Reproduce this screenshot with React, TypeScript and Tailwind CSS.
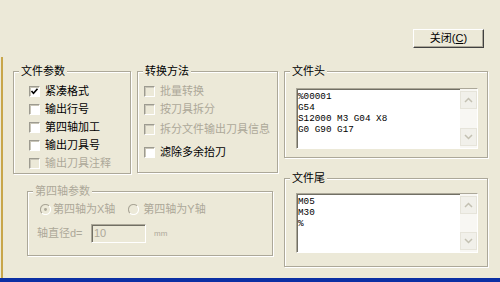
import clsx from "clsx";

function Check({ checked, disabled }: { checked?: boolean; disabled?: boolean }) {
  return (
    <span
      className={clsx(
        "relative box-border block size-[11px] shrink-0 border border-t-[#9d9b90] border-l-[#9d9b90] border-r-white border-b-white shadow-[inset_1px_1px_0_#c9c6b8]",
        disabled ? "bg-[#ECE9D8]" : "bg-white"
      )}
    >
      {checked && (
        <svg className="absolute left-0 top-0" width="9" height="9" viewBox="0 0 9 9">
          <path d="M1.5 4 L3.5 6.3 L7.5 1.8" stroke="#000" strokeWidth="1.6" fill="none" />
        </svg>
      )}
    </span>
  );
}

function Radio({ on }: { on?: boolean }) {
  return (
    <svg width="11" height="11" viewBox="0 0 12 12" className="shrink-0">
      <circle cx="6" cy="6" r="5.5" fill="#ECE9D8" />
      <path d="M9.9 2.1 A5.5 5.5 0 0 0 2.1 9.9" stroke="#aca899" strokeWidth="1.2" fill="none" />
      <path d="M2.1 9.9 A5.5 5.5 0 0 0 9.9 2.1" stroke="#ffffff" strokeWidth="1.2" fill="none" />
      {on && <circle cx="6" cy="6" r="1.6" fill="#aca899" />}
    </svg>
  );
}

function Group({
  title,
  dim,
  className,
  children,
}: {
  title: string;
  dim?: boolean;
  className?: string;
  children: React.ReactNode;
}) {
  return (
    <fieldset
      className={clsx(
        "box-border shrink-0 border border-[#aca899] shadow-[inset_1px_1px_0_#ffffff,1px_1px_0_#ffffff]",
        className
      )}
    >
      <legend className={clsx("ml-[5px] bg-[#ECE9D8] px-[2px] leading-[13px]", dim && "text-[#aca899]")}>
        {title}
      </legend>
      {children}
    </fieldset>
  );
}

function Row({ label, checked, disabled, className }: { label: string; checked?: boolean; disabled?: boolean; className?: string }) {
  return (
    <div className={clsx("flex h-[18px] items-center gap-[5px]", className)}>
      <Check checked={checked} disabled={disabled} />
      <span className={clsx("whitespace-nowrap", disabled && "text-[#aca899]")}>{label}</span>
    </div>
  );
}

function Chevron({ up }: { up?: boolean }) {
  return (
    <svg width="9" height="6" viewBox="0 0 9 6">
      <path d={up ? "M1 5 L4.5 1.5 L8 5" : "M1 1 L4.5 4.5 L8 1"} stroke="#c3c0b2" strokeWidth="1.5" fill="none" />
    </svg>
  );
}

function CodeBox({ lines, className }: { lines: string[]; className?: string }) {
  return (
    <div
      className={clsx(
        "box-border flex w-[182px] border border-t-[#aca899] border-l-[#aca899] border-r-white border-b-white bg-white shadow-[inset_1px_1px_0_#716f64]",
        className
      )}
    >
      <div className="flex-1 pl-[1px] pt-[2px] font-['Liberation_Mono',monospace] text-[9.3px] leading-[11px] whitespace-pre">
        {lines.map((l) => (
          <div key={l}>{l}</div>
        ))}
      </div>
      <div className="flex w-[17px] flex-col justify-between bg-[#f8f7f3] py-[2px]">
        <div className="flex h-[18px] items-center justify-center border border-[#e6e4da] bg-[#f1f0ea]">
          <Chevron up />
        </div>
        <div className="flex h-[18px] items-center justify-center border border-[#e6e4da] bg-[#f1f0ea]">
          <Chevron />
        </div>
      </div>
    </div>
  );
}

export default function App() {
  return (
    <div className="flex h-[282px] w-[500px] flex-col overflow-hidden bg-[#ECE9D8] font-['Liberation_Sans','Noto_Sans_CJK_SC',sans-serif] text-[11px] text-black">
      <div className="flex h-[57px] shrink-0 justify-end pr-[16px] pt-[29px]">
        <button className="box-border flex h-[19px] w-[71px] items-center justify-center border border-t-white border-l-white border-r-[#404040] border-b-[#404040] bg-[#ECE9D8] shadow-[inset_-1px_-1px_0_#aca899]">
          关闭(<u>C</u>)
        </button>
      </div>

      <div className="ml-px flex h-[221px] shrink-0 border-l-2 border-[#c8a64a] pl-[10px] pt-[8px]">
        <div className="flex w-[264px] flex-col">
          <div className="flex gap-[6px]">
            <Group title="文件参数" className="h-[109px] w-[118px]">
              <div className="pl-[15px] pt-[4px]">
                <Row label="紧凑格式" checked />
                <Row label="输出行号" />
                <Row label="第四轴加工" />
                <Row label="输出刀具号" />
                <Row label="输出刀具注释" disabled />
              </div>
            </Group>
            <Group title="转换方法" className="h-[108px] w-[141px]">
              <div className="pl-[6px] pt-[4px]">
                <Row label="批量转换" disabled />
                <Row label="按刀具拆分" disabled />
                <Row label="拆分文件输出刀具信息" disabled className="mt-[2px]" />
                <Row label="滤除多余抬刀" className="mt-[5px]" />
              </div>
            </Group>
          </div>
          <Group title="第四轴参数" dim className="ml-[14px] mt-[11px] h-[71px] w-[246px] text-[#aca899]">
            <div className="mt-[2px] flex h-[18px] items-center pl-[12px]">
              <Radio on />
              <span className="ml-[2px] whitespace-nowrap">第四轴为X轴</span>
              <span className="ml-[13px]">
                <Radio />
              </span>
              <span className="ml-[4px] whitespace-nowrap">第四轴为Y轴</span>
            </div>
            <div className="mt-[6px] flex h-[19px] items-center pl-[9px]">
              <span className="w-[54px] whitespace-nowrap">轴直径d=</span>
              <div className="box-border flex h-[19px] w-[55px] items-center border border-t-[#aca899] border-l-[#aca899] border-r-white border-b-white pl-[2px] shadow-[inset_1px_1px_0_#716f64]">
                10
              </div>
              <span className="ml-[8px] text-[8px]">mm</span>
            </div>
          </Group>
        </div>

        <div className="ml-[7px] flex w-[204px] flex-col">
          <Group title="文件头" className="h-[93px]">
            <CodeBox lines={["%00001", "G54", "S12000 M3 G04 X8", "G0 G90 G17"]} className="ml-[11px] mt-[10px] h-[61px]" />
          </Group>
          <Group title="文件尾" className="mt-[14px] h-[95px]">
            <CodeBox lines={["M05", "M30", "%"]} className="ml-[11px] mt-[8px] h-[60px]" />
          </Group>
        </div>
      </div>

      <div className="h-[4px] shrink-0 bg-[#0b2fa4]" />
    </div>
  );
}
